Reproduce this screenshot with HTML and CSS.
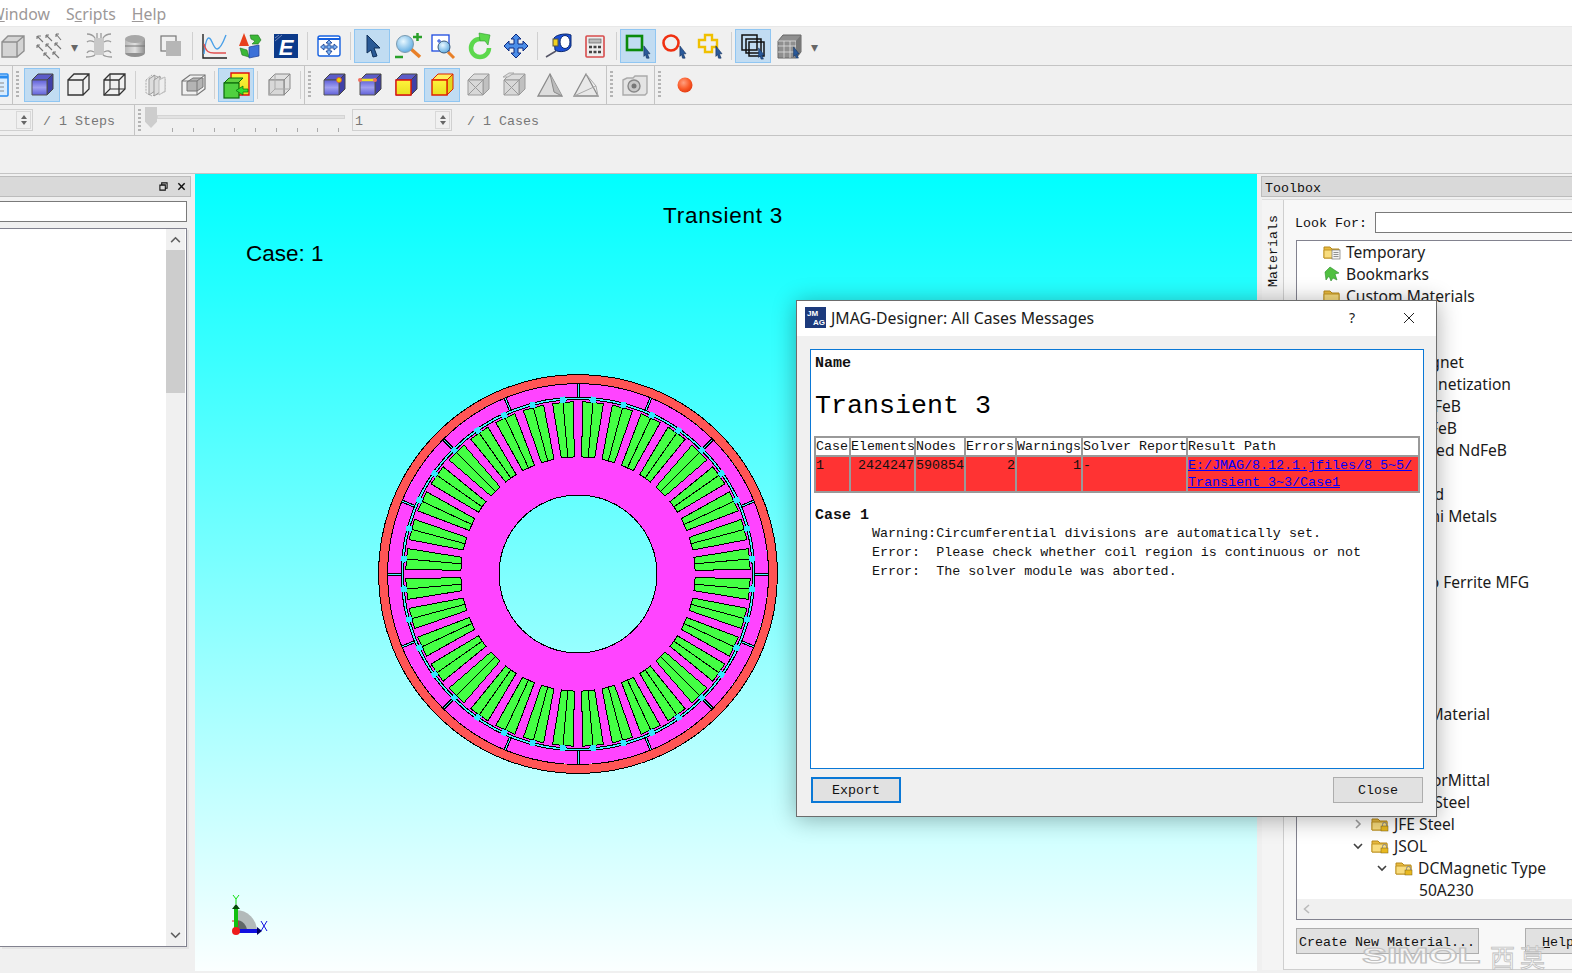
FILE: index.html
```html
<!DOCTYPE html>
<html lang="en">
<head>
<meta charset="utf-8">
<title>JMAG-Designer</title>
<link rel="stylesheet" href="styles.css">
</head>
<body>
<svg class="defs" aria-hidden="true">
  <defs>
    <linearGradient id="gb" x1="0" y1="0" x2="0" y2="1"><stop offset="0" stop-color="#5f5fd8"/><stop offset=".5" stop-color="#a0a0f0"/><stop offset="1" stop-color="#6060d8"/></linearGradient>
    <linearGradient id="gy" x1="0" y1="0" x2="0" y2="1"><stop offset="0" stop-color="#fff23c"/><stop offset="1" stop-color="#e8e020"/></linearGradient>
    <linearGradient id="gc" x1="0" y1="0" x2="1" y2="0"><stop offset="0" stop-color="#b8b8b8"/><stop offset=".5" stop-color="#e0e0e0"/><stop offset="1" stop-color="#8e8e8e"/></linearGradient>
    <radialGradient id="gr" cx=".4" cy=".35" r=".7"><stop offset="0" stop-color="#ffa080"/><stop offset=".6" stop-color="#fa5a28"/><stop offset="1" stop-color="#e03810"/></radialGradient>
    <radialGradient id="gl" cx=".4" cy=".35" r=".7"><stop offset="0" stop-color="#e8f8ff"/><stop offset="1" stop-color="#5aa8e0"/></radialGradient>
    <symbol id="bluecube" viewBox="0 0 28 28">
      <path d="M4 9L10 3H25L19 9Z" fill="#5c5cc8" stroke="#444" stroke-width="1"/>
      <path d="M19 9L25 3V18L19 24Z" fill="#4040a8" stroke="#444" stroke-width="1"/>
      <path d="M4 9H19V24H4Z" fill="url(#gb)" stroke="#555" stroke-width="1"/>
    </symbol>
    <symbol id="wire" viewBox="0 0 28 28">
      <path d="M4 9H19V24H4ZM4 9L10 3H25V18L19 24M19 9L25 3" fill="none" stroke="#333" stroke-width="1.3"/>
    </symbol>
    <symbol id="crate" viewBox="0 0 28 28">
      <path d="M4 9L10 3H25L19 9Z" fill="#ddd" stroke="#9a9a9a"/>
      <path d="M19 9L25 3V18L19 24Z" fill="#c0c0c0" stroke="#9a9a9a"/>
      <path d="M4 9H19V24H4Z" fill="#d8d8d8" stroke="#9a9a9a"/>
      <path d="M4 9L19 24M19 9L4 24" stroke="#9a9a9a" fill="none"/>
    </symbol>
    <symbol id="cursor" viewBox="0 0 10 16">
      <path d="M2 1L9 10L6 10L8 15L5 15L4 11L2 13Z" fill="#2a5a9a" stroke="#12305c" stroke-width=".7"/>
    </symbol>
    <symbol id="folder" viewBox="0 0 18 16">
      <path d="M1 3H7L9 5H16V14H1Z" fill="#e7b93f" stroke="#b88a1c"/>
      <path d="M1 6H16V14H1Z" fill="#f8dc7e" stroke="#c29624"/>
    </symbol>
  </defs>
</svg>

<div class="app">
  <nav class="menubar">
    <span class="menu menu-first"><u>W</u>indow</span>
    <span class="menu">S<u>c</u>ripts</span>
    <span class="menu"><u>H</u>elp</span>
  </nav>

  <div class="toolbar tb1">
    <button class="tool"><svg viewBox="0 0 28 28"><path d="M3 10H18V25H3ZM3 10L9 4H25V19L18 25M18 10L25 4" fill="#d4d4d4" stroke="#8f8f8f" stroke-width="1.4"/></svg></button>
    <button class="tool"><svg viewBox="0 0 28 28"><g stroke="#777" stroke-width="1.1" fill="none"><path d="M2 4l6 6M6 4l-3 0M2 4v3"/><path d="M11 3l6 6M11 3h3M11 3v3"/><path d="M21 2l5 6M21 2h3M21 2v3"/><path d="M2 13l6 6M2 13h3M2 13v3"/><path d="M11 12l6 6M11 12h3M11 12v3"/><path d="M20 11l6 6M20 11h3M20 11v3"/><path d="M9 21l6 6M9 21h3M9 21v3"/><path d="M18 20l6 6M18 20h3M18 20v3"/></g></svg></button>
    <span class="drop">&#9662;</span>
    <button class="tool"><svg viewBox="0 0 28 28"><rect x="9" y="6" width="10" height="17" fill="#c8c8c8"/><g stroke="#9a9a9a" stroke-width="1.3" fill="none"><path d="M10 6C8 3 5 2 2 2M18 6C20 3 23 2 26 2M12 6V1M16 6V1M10 23C7 25 4 25 1 25M18 23C21 25 24 25 27 25M9 10C6 8 3 9 2 10M19 10C22 8 25 9 26 10M9 20C5 18 3 19 2 21M19 20C23 18 25 19 26 21"/></g></svg></button>
    <button class="tool"><svg viewBox="0 0 28 28"><ellipse cx="14" cy="21" rx="10" ry="4" fill="#909090"/><rect x="4" y="7" width="20" height="14" fill="url(#gc)"/><ellipse cx="14" cy="7" rx="10" ry="4" fill="#a8a8a8"/><path d="M4 14H24" stroke="#777"/></svg></button>
    <button class="tool"><svg viewBox="0 0 28 28"><rect x="4" y="4" width="15" height="15" fill="none" stroke="#777" stroke-width="1.2"/><rect x="9" y="9" width="15" height="15" fill="#b6b6b6"/></svg></button>
    <span class="sep"></span>
    <button class="tool"><svg viewBox="0 0 28 28"><path d="M3 2V26H27" fill="none" stroke="#222" stroke-width="1.4"/><path d="M4 22C6 4 9 3 12 10S18 24 26 3" fill="none" stroke="#4aa0e8" stroke-width="1.4"/><path d="M4 12C6 20 9 21 14 21H26" fill="none" stroke="#e05050" stroke-width="1.4"/></svg></button>
    <button class="tool"><svg viewBox="0 0 28 28"><path d="M3 14L8 1L13 14Z" fill="#e8401c"/><path d="M14 3h8l3 5-3 4h-6l3-3-4-2Z" fill="#3cb838" stroke="#1c701c" stroke-width=".6"/><path d="M4 16l7 2 2 7-7-2Z" fill="#3cb838" stroke="#1c701c" stroke-width=".6"/><path d="M13 15L23 13V24L13 26Z" fill="#3c70d8" stroke="#1c3c90" stroke-width=".7"/></svg></button>
    <button class="tool"><svg viewBox="0 0 28 28"><rect x="2" y="2" width="24" height="24" fill="#0c3a8a"/><path d="M3 9L10 3M3 6L7 3" stroke="#8a9ac8" stroke-width=".8"/><text x="14" y="23" class="e-logo">E</text></svg></button>
    <span class="sep"></span>
    <button class="tool"><svg viewBox="0 0 28 28"><rect x="3" y="4" width="22" height="20" rx="2" fill="#fff" stroke="#1560e0" stroke-width="1.4"/><path d="M3 7H25" stroke="#1560e0" stroke-width="2"/><path d="M14 8L11 11H13V14H9V12L5.500 15 9 18V16H13V19H11L14 23 17 19H15V16H19V18L22.500 15 19 12V14H15V11H17Z" fill="#7ab0f0" stroke="#103a90" stroke-width=".8"/></svg></button>
    <span class="sep"></span>
    <button class="tool on"><svg viewBox="0 0 28 28"><path d="M9 3L22 16 16 16 19 24 15 25 13 18 9 21Z" fill="#2a5a96" stroke="#10305a"/></svg></button>
    <button class="tool"><svg viewBox="0 0 28 28"><path d="M17 17L26 25" stroke="#e88028" stroke-width="3.500"/><circle cx="11" cy="12" r="8.500" fill="url(#gl)" stroke="#7a9ab0"/><path d="M19 5H28M23.500 1V9" stroke="#2aa02a" stroke-width="2.500"/><path d="M1 25H9" stroke="#2aa02a" stroke-width="2.500" fill="none"/></svg></button>
    <button class="tool"><svg viewBox="0 0 28 28"><rect x="2" y="3" width="17" height="16" fill="#fff" stroke="#1c4ae0" stroke-width="1.3"/><path d="M7 9h4M9 7v4" stroke="#1c4ae0"/><path d="M18 20L24 26" stroke="#e88028" stroke-width="3"/><circle cx="14" cy="15" r="6" fill="url(#gl)" stroke="#3a5a7a"/></svg></button>
    <button class="tool"><svg viewBox="0 0 28 28"><path d="M14 7A9 9 0 1 0 23 16" fill="none" stroke="#5cd84c" stroke-width="4.500"/><path d="M13 1L24 3 22 13 19 9 14 9Z" fill="#5cd84c" stroke="#2a9a2a" stroke-width=".6"/></svg></button>
    <button class="tool"><svg viewBox="0 0 28 28"><path d="M14 2L19 7H16V12H21V9L26 14 21 19V16H16V21H19L14 26 9 21H12V16H7V19L2 14 7 9V12H12V7H9Z" fill="#4c8ee8" stroke="#0c2a80"/></svg></button>
    <span class="sep"></span>
    <button class="tool"><svg viewBox="0 0 28 28"><path d="M1 25L11 19" stroke="#556" stroke-width="1.5"/><path d="M9 6C12 2 22 1 26 3V14C24 20 14 21 10 18Z" fill="#1c50d8" stroke="#0c2a70"/><ellipse cx="20" cy="10" rx="5" ry="6.500" fill="#fff" stroke="#0c2a70"/><rect x="8" y="7" width="5" height="7" fill="#f0d020" stroke="#554"/></svg></button>
    <button class="tool"><svg viewBox="0 0 28 28"><rect x="5" y="4" width="18" height="21" rx="1" fill="#eee" stroke="#d84c4c" stroke-width="1.6"/><rect x="8" y="7" width="12" height="4" fill="#bbb" stroke="#666" stroke-width=".7"/><path d="M8 15h3M12.500 15h3M17 15h3M8 20h3M12.500 20h3M17 20h3" stroke="#444" stroke-width="2.500"/></svg></button>
    <span class="sep"></span>
    <button class="tool on"><svg viewBox="0 0 28 28"><rect x="3" y="4" width="15" height="14" fill="none" stroke="#0a8a0a" stroke-width="2.600"/><use href="#cursor" x="18" y="13" width="9" height="14"/></svg></button>
    <button class="tool"><svg viewBox="0 0 28 28"><circle cx="11" cy="11" r="7.500" fill="none" stroke="#f03010" stroke-width="2.600"/><use href="#cursor" x="18" y="13" width="9" height="14"/></svg></button>
    <button class="tool"><svg viewBox="0 0 28 28"><path d="M9 3H16V8H21V15H16V20H9V15H3V8H9Z" fill="none" stroke="#f0c000" stroke-width="2.400"/><use href="#cursor" x="18" y="13" width="9" height="14"/></svg></button>
    <span class="sep"></span>
    <button class="tool on"><svg viewBox="0 0 28 28"><g fill="none" stroke="#111" stroke-width="1.500"><rect x="3" y="3" width="15" height="15"/><rect x="7" y="7" width="15" height="14"/><rect x="10" y="10" width="15" height="14"/></g><use href="#cursor" x="18" y="15" width="8" height="13"/></svg></button>
    <button class="tool"><svg viewBox="0 0 28 28"><path d="M3 9L8 3H26V20L21 26H3Z" fill="#8f8f8f" stroke="#666"/><path d="M3 14H21M3 20H21M9 9V26M15 9V26M3 9H21V26" stroke="#e0e0e0" fill="none" stroke-width=".8"/><path d="M21 9L26 3V20L21 26Z" fill="#777"/><use href="#cursor" x="17" y="14" width="8" height="13"/></svg></button>
    <span class="drop">&#9662;</span>
  </div>

  <div class="toolbar tb2">
    <div class="tbgroup tbg-a">
      <svg class="cal" viewBox="0 0 10 24"><rect x="-10" y="1" width="18" height="22" rx="1" fill="#d8ecff" stroke="#2a8cf0" stroke-width="1.500"/><path d="M-10 4H8" stroke="#2a8cf0" stroke-width="3"/><path d="M-6 10H4M-6 14H4M-6 18H4" stroke="#888" stroke-width="1"/></svg>
    </div>
    <div class="tbgroup tbg-b">
      <span class="grip"></span>
      <button class="tool on"><svg viewBox="0 0 28 28"><use href="#bluecube"/></svg></button>
      <button class="tool"><svg viewBox="0 0 28 28"><path d="M4 9H19V24H4ZM4 9L10 3H25V18L19 24M19 9L25 3" fill="none" stroke="#333" stroke-width="1.300"/></svg></button>
      <button class="tool"><svg viewBox="0 0 28 28"><use href="#wire"/><path d="M10 3V18H25M10 18L4 24" fill="none" stroke="#333" stroke-width="1.100"/></svg></button>
      <span class="sep"></span>
      <button class="tool"><svg viewBox="0 0 28 28"><g fill="none" stroke="#aaa"><path d="M3 9L9 4 22 8V21L9 25 3 22Z" stroke-dasharray="2 1"/></g><path d="M6 8L12 4V20L6 24Z" fill="#ddd" stroke="#999"/><path d="M11 9L17 5V21L11 25Z" fill="#ddd" stroke="#999"/><path d="M16 9L22 6V20L16 24Z" fill="#eee" stroke="#bbb"/></svg></button>
      <button class="tool"><svg viewBox="0 0 28 28"><path d="M3 10L11 4H26V18L18 24H3Z" fill="none" stroke="#777" stroke-width="1.200"/><path d="M8 11L14 7H24V16L18 20H8Z" fill="#b4b4b4" stroke="#777"/><path d="M3 10H18V24M18 10L26 4" fill="none" stroke="#777"/></svg></button>
      <span class="sep"></span>
      <button class="tool on"><svg viewBox="0 0 28 28"><path d="M9 2H27V24H9Z" fill="url(#gy)" stroke="#e01010" stroke-width="1.400"/><path d="M2 12L7 7H21L16 12Z" fill="#60d040" stroke="#0a6a0a"/><rect x="2" y="12" width="15" height="15" fill="#50d040" stroke="#0a6a0a" stroke-width="1.200"/><path d="M21 15L14 19.500 21 24V21H26V18H21Z" fill="#30e030" stroke="#0a6a0a" stroke-width=".7"/></svg></button>
      <span class="sep"></span>
      <button class="tool"><svg viewBox="0 0 28 28"><path d="M4 9L10 3H25L19 9ZM19 9L25 3V18L19 24Z" fill="#e0e0e0" stroke="#888"/><path d="M4 9H19V24H4Z" fill="#d8d8d8" stroke="#888" stroke-width="1.200"/><path d="M10 3V18H25M10 18L4 24" fill="none" stroke="#aaa"/></svg></button>
      <span class="sep"></span>
    </div>
    <div class="tbgroup tbg-c">
      <span class="grip"></span>
      <button class="tool"><svg viewBox="0 0 28 28"><use href="#bluecube"/><circle cx="19" cy="9" r="2.500" fill="#e8d800" stroke="#e05030" stroke-width=".8"/></svg></button>
      <button class="tool"><svg viewBox="0 0 28 28"><use href="#bluecube"/><path d="M4 9H19" stroke="#f0e020" stroke-width="2.500"/><circle cx="4" cy="9" r="2" fill="#f07060"/><circle cx="19" cy="9" r="2" fill="#f07060"/></svg></button>
      <button class="tool"><svg viewBox="0 0 28 28"><use href="#bluecube"/><path d="M4 9H19V24H4Z" fill="url(#gy)" stroke="#e01010" stroke-width="1.400"/></svg></button>
      <button class="tool on"><svg viewBox="0 0 28 28"><path d="M4 9L10 3H25L19 9Z" fill="#fff060" stroke="#e02000"/><path d="M19 9L25 3V18L19 24Z" fill="#e0d820" stroke="#e02000"/><path d="M4 9H19V24H4Z" fill="url(#gy)" stroke="#e02000" stroke-width="1.400"/></svg></button>
      <button class="tool"><svg viewBox="0 0 28 28"><use href="#crate"/></svg></button>
      <button class="tool"><svg viewBox="0 0 28 28"><use href="#crate"/><path d="M3 6L9 2H14L8 6Z" fill="#ddd" stroke="#aaa"/></svg></button>
      <button class="tool"><svg viewBox="0 0 28 28"><path d="M2 25L14 3 26 25Z" fill="#ddd" stroke="#8a8a8a" stroke-width="1.300"/><path d="M14 3L18 21 26 25" fill="#bbb" stroke="#8a8a8a"/></svg></button>
      <button class="tool"><svg viewBox="0 0 28 28"><path d="M2 25L14 3 26 25Z" fill="#e8e8e8" stroke="#8a8a8a" stroke-width="1.300"/><path d="M14 3L24 15 26 25M2 25L24 15" fill="none" stroke="#aaa"/></svg></button>
    </div>
    <div class="tbgroup tbg-d">
      <span class="grip"></span>
      <button class="tool"><svg viewBox="0 0 28 28"><path d="M2 9L6 7H12L14 5H26V22L24 24H2Z" fill="#e4e4e4" stroke="#aaa" stroke-width="1.400"/><circle cx="13" cy="15" r="6" fill="#c8c8c8" stroke="#888" stroke-width="1.400"/><circle cx="13" cy="15" r="2.500" fill="#777"/></svg></button>
    </div>
    <div class="tbgroup tbg-e">
      <span class="grip"></span>
      <button class="tool"><svg viewBox="0 0 28 28"><circle cx="14" cy="14" r="7.500" fill="url(#gr)"/></svg></button>
    </div>
  </div>

  <div class="toolbar tb3">
    <div class="tb3-left">
      <div class="spin spin-a"><span class="spin-val"></span><span class="spin-btn"><i class="up"></i><i class="down"></i></span></div>
      <span class="steptext">/ 1 Steps</span>
    </div>
    <div class="tb3-right">
      <span class="grip"></span>
      <div class="slider"><span class="groove"></span><span class="handle"></span><span class="ticks"></span></div>
      <div class="spin spin-b"><span class="spin-val">1</span><span class="spin-btn"><i class="up"></i><i class="down"></i></span></div>
      <span class="steptext">/ 1 Cases</span>
    </div>
  </div>

  <div class="band"></div>

  <main class="main">
    <aside class="left">
      <div class="dock">
        <svg class="dock-ic" viewBox="0 0 10 10"><path d="M3 1H9V7H7V3H3ZM1 3.500H7V9H1Z" fill="none" stroke="#111" stroke-width="1.200"/></svg>
        <svg class="dock-ic" viewBox="0 0 10 10"><path d="M1.500 1.500L8.500 8.500M8.500 1.500L1.500 8.500" stroke="#111" stroke-width="1.600"/></svg>
      </div>
      <div class="left-input"></div>
      <div class="left-tree">
        <div class="vscroll">
          <span class="sb-btn"><svg viewBox="0 0 12 8"><path d="M1 7L6 2 11 7" fill="none" stroke="#606060" stroke-width="1.800"/></svg></span>
          <span class="sb-thumb"></span>
          <span class="sb-track"></span>
          <span class="sb-btn"><svg viewBox="0 0 12 8"><path d="M1 1L6 6 11 1" fill="none" stroke="#606060" stroke-width="1.800"/></svg></span>
        </div>
      </div>
    </aside>

    <section class="view">
      <div class="view-title">Transient 3</div>
      <div class="view-case">Case: 1</div>
      <svg class="motor" viewBox="-210 -210 420 420">
        <defs>
          <g id="slot">
            <path d="M-10.500 -172L10.500 -172 6.500 -117 -6.500 -117Z" fill="#44ff44" stroke="#000" stroke-width="1"/>
            <path d="M0 -172V-117" stroke="#000" stroke-width="1"/>
            <path d="M-3 -172L-2.500 -178H2.500L3 -172Z" fill="#33e8ff"/>
          </g>
          <g id="div">
            <path d="M0 -190V-177" stroke="#000" stroke-width="3"/>
            <path d="M0 -190V-177" stroke="#44f4ff" stroke-width="1"/>
          </g>
        </defs>
        <path class="stator" d="M-190 0A190 190 0 1 0 190 0A190 190 0 1 0 -190 0ZM-79 0A79 79 0 1 1 79 0A79 79 0 1 1 -79 0Z" fill="#ff44ff" fill-rule="evenodd"/>
        <circle r="195" fill="none" stroke="#ff5555" stroke-width="9"/>
        <circle r="199.500" fill="none" stroke="#000" stroke-width="1"/>
        <circle r="190.500" fill="none" stroke="#000" stroke-width="1"/>
        <circle r="79" fill="none" stroke="#000" stroke-width="1"/>
        <circle r="177" fill="none" stroke="#000" stroke-width="1"/>
        <circle r="175.500" fill="none" stroke="#44f4ff" stroke-width="2"/>
        <circle r="174.500" fill="none" stroke="#000" stroke-width="1"/>
        <use href="#div"/><use href="#div" transform="rotate(22.5)"/><use href="#div" transform="rotate(45)"/><use href="#div" transform="rotate(67.5)"/><use href="#div" transform="rotate(90)"/><use href="#div" transform="rotate(112.5)"/><use href="#div" transform="rotate(135)"/><use href="#div" transform="rotate(157.5)"/><use href="#div" transform="rotate(180)"/><use href="#div" transform="rotate(202.5)"/><use href="#div" transform="rotate(225)"/><use href="#div" transform="rotate(247.5)"/><use href="#div" transform="rotate(270)"/><use href="#div" transform="rotate(292.5)"/><use href="#div" transform="rotate(315)"/><use href="#div" transform="rotate(337.5)"/>
        <use href="#slot" transform="rotate(5)"/><use href="#slot" transform="rotate(15)"/><use href="#slot" transform="rotate(25)"/><use href="#slot" transform="rotate(35)"/><use href="#slot" transform="rotate(45)"/><use href="#slot" transform="rotate(55)"/><use href="#slot" transform="rotate(65)"/><use href="#slot" transform="rotate(75)"/><use href="#slot" transform="rotate(85)"/><use href="#slot" transform="rotate(95)"/><use href="#slot" transform="rotate(105)"/><use href="#slot" transform="rotate(115)"/><use href="#slot" transform="rotate(125)"/><use href="#slot" transform="rotate(135)"/><use href="#slot" transform="rotate(145)"/><use href="#slot" transform="rotate(155)"/><use href="#slot" transform="rotate(165)"/><use href="#slot" transform="rotate(175)"/><use href="#slot" transform="rotate(185)"/><use href="#slot" transform="rotate(195)"/><use href="#slot" transform="rotate(205)"/><use href="#slot" transform="rotate(215)"/><use href="#slot" transform="rotate(225)"/><use href="#slot" transform="rotate(235)"/><use href="#slot" transform="rotate(245)"/><use href="#slot" transform="rotate(255)"/><use href="#slot" transform="rotate(265)"/><use href="#slot" transform="rotate(275)"/><use href="#slot" transform="rotate(285)"/><use href="#slot" transform="rotate(295)"/><use href="#slot" transform="rotate(305)"/><use href="#slot" transform="rotate(315)"/><use href="#slot" transform="rotate(325)"/><use href="#slot" transform="rotate(335)"/><use href="#slot" transform="rotate(345)"/><use href="#slot" transform="rotate(355)"/>
      </svg>
      <svg class="triad" viewBox="0 0 44 48">
        <path d="M8 37V16A21 21 0 0 1 29 37Z" fill="#b2baba"/>
        <path d="M8 37V26A11 11 0 0 1 19 37Z" fill="#606868"/>
        <path d="M4 27H10V33" fill="none" stroke="#e02020" stroke-width="1"/>
        <path d="M8 37V14" stroke="#10c010" stroke-width="4"/>
        <path d="M4 15L8 10 12 15Z" fill="#064806"/>
        <path d="M8 37H30" stroke="#1010e0" stroke-width="4"/>
        <path d="M29 33L34 37 29 41Z" fill="#000060"/>
        <circle cx="8" cy="37" r="4" fill="#ee1c1c"/>
        <path d="M5 1L8 5 11 1M8 5V10" fill="none" stroke="#10e010" stroke-width="1"/>
        <path d="M33 27L39 37M39 27L33 37" stroke="#1010e0" stroke-width="1"/>
      </svg>
    </section>

    <aside class="toolbox">
      <div class="tb-title">Toolbox</div>
      <div class="tb-frame">
        <div class="tb-tab"><span class="tb-tabtext">Materials</span></div>
        <div class="tb-panel">
          <div class="look"><span class="look-label">Look For:</span><span class="look-input"></span></div>
          <div class="tree">
            <div class="tree-rows">
              <div class="row d0"><span class="chev"></span><svg class="fold" viewBox="0 0 18 16"><use href="#folder"/><rect x="9" y="6" width="8" height="9" fill="#f4f4f4" stroke="#777" stroke-width=".7"/><path d="M10.500 8.500h5M10.500 10.500h5M10.500 12.500h5" stroke="#777" stroke-width=".8"/></svg><span>Temporary</span></div>
              <div class="row d0"><span class="chev"></span><svg class="fold" viewBox="0 0 18 16"><path d="M7 1L16 7 12 8 14 14 10 12 8 15 6 10 3 14 2 6Z" fill="#50c040" stroke="#2a8a2a" stroke-width=".6"/></svg><span>Bookmarks</span></div>
              <div class="row d0"><span class="chev"></span><svg class="fold" viewBox="0 0 18 16"><use href="#folder"/></svg><span>Custom Materials</span></div>
              <div class="row"></div><div class="row"></div>
              <div class="row end e1"><span>Magnet</span></div>
              <div class="row end e2"><span>Magnetization</span></div>
              <div class="row end e3"><span>NdFeB</span></div>
              <div class="row end e4"><span>SmFeB</span></div>
              <div class="row end e5"><span>Bonded NdFeB</span></div>
              <div class="row"></div>
              <div class="row end e6"><span>Bonded</span></div>
              <div class="row end e7"><span>Hitachi Metals</span></div>
              <div class="row"></div><div class="row"></div>
              <div class="row end e8"><span>Toho Ferrite MFG</span></div>
              <div class="row"></div><div class="row"></div><div class="row"></div><div class="row"></div><div class="row"></div>
              <div class="row end e9"><span>New Material</span></div>
              <div class="row"></div><div class="row"></div>
              <div class="row end e9"><span>ArcelorMittal</span></div>
              <div class="row end e10"><span>Nippon Steel</span></div>
              <div class="row d2"><svg class="chev" viewBox="0 0 12 12"><path d="M4 2L8 6 4 10" fill="none" stroke="#a0a0a0" stroke-width="1.600"/></svg><svg class="fold" viewBox="0 0 18 16"><use href="#folder"/><rect x="10" y="10" width="7" height="5" fill="#e8b820" stroke="#7a6010" stroke-width=".5"/><path d="M11.500 10V8.500a2 2 0 0 1 4 0V10" fill="none" stroke="#888" stroke-width="1"/></svg><span>JFE Steel</span></div>
              <div class="row d2"><svg class="chev" viewBox="0 0 12 12"><path d="M2 4L6 8 10 4" fill="none" stroke="#404040" stroke-width="1.600"/></svg><svg class="fold" viewBox="0 0 18 16"><use href="#folder"/><rect x="10" y="10" width="7" height="5" fill="#e8b820" stroke="#7a6010" stroke-width=".5"/><path d="M11.500 10V8.500a2 2 0 0 1 4 0V10" fill="none" stroke="#888" stroke-width="1"/></svg><span>JSOL</span></div>
              <div class="row d3"><svg class="chev" viewBox="0 0 12 12"><path d="M2 4L6 8 10 4" fill="none" stroke="#404040" stroke-width="1.600"/></svg><svg class="fold" viewBox="0 0 18 16"><use href="#folder"/><rect x="10" y="10" width="7" height="5" fill="#e8b820" stroke="#7a6010" stroke-width=".5"/><path d="M11.500 10V8.500a2 2 0 0 1 4 0V10" fill="none" stroke="#888" stroke-width="1"/></svg><span>DCMagnetic Type</span></div>
              <div class="row d4"><span>50A230</span></div>
            </div>
            <div class="hscroll"><svg viewBox="0 0 10 12"><path d="M7 2L2.500 6 7 10" fill="none" stroke="#bbb" stroke-width="1.600"/></svg></div>
          </div>
          <div class="tb-btns">
            <button class="qbtn create">Create New Material...</button>
            <button class="qbtn help"><u>H</u>elp</button>
          </div>
        </div>
      </div>
    </aside>
  </main>

  <div class="dialog">
    <header class="dlg-head">
      <svg class="dlg-ic" viewBox="0 0 21 21"><rect width="21" height="21" fill="#1c3a7c"/><text x="2" y="9" class="jm">JM</text><text x="8" y="18" class="jm">AG</text></svg>
      <span class="dlg-title">JMAG-Designer: All Cases Messages</span>
      <span class="dlg-q">?</span>
      <svg class="dlg-x" viewBox="0 0 12 12"><path d="M1 1L11 11M11 1L1 11" stroke="#222" stroke-width="1"/></svg>
    </header>
    <div class="dlg-body">
      <div class="msg">
        <div class="m-name">Name</div>
        <div class="m-h">Transient 3</div>
        <table class="m-table">
          <colgroup><col class="c1"><col class="c2"><col class="c3"><col class="c4"><col class="c5"><col class="c6"><col class="c7"></colgroup>
          <tr class="m-hd"><td>Case</td><td>Elements</td><td>Nodes</td><td>Errors</td><td>Warnings</td><td>Solver Report</td><td>Result Path</td></tr>
          <tr class="m-err"><td>1</td><td class="num">2424247</td><td class="num">590854</td><td class="num">2</td><td class="num">1</td><td>-</td><td class="path"><a href="#">E:/JMAG/8.12.1.jfiles/8_5~5/ Transient_3~3/Case1</a></td></tr>
        </table>
        <div class="m-case">Case 1</div>
        <div class="m-lines">
          <div>Warning:Circumferential divisions are automatically set.</div>
          <div>Error:  Please check whether coil region is continuous or not</div>
          <div>Error:  The solver module was aborted.</div>
        </div>
      </div>
      <div class="dlg-btns">
        <button class="qbtn export">Export</button>
        <button class="qbtn close">Close</button>
      </div>
    </div>
  </div>

  <div class="wm"><span class="wm-a">SIMOL</span><span class="wm-b">西莫</span></div>
</div>
</body>
</html>
```
FILE: styles.css
```css
* { box-sizing: border-box; }
html, body { margin: 0; padding: 0; }
body { width: 1572px; height: 973px; overflow: hidden; background: #f0f0f0; font-family: "Noto Sans", sans-serif; }
.defs { position: absolute; width: 0; height: 0; }
.app { position: relative; width: 1572px; height: 973px; overflow: hidden; display: flex; flex-direction: column; background: #f0f0f0; }

.menubar { height: 27px; background: #fff; border-bottom: 1px solid #e8e8e8; display: flex; align-items: center; color: #9c9898; font-size: 15.8px; flex: none; padding-top: 2px; }
.menu { margin-right: 16px; }
.menu-first { margin-left: -10px; }

.toolbar { display: flex; flex: none; border-bottom: 1px solid #c4c4c4; background: #f0f0f0; }
.tb1 { height: 39px; align-items: center; padding-left: 0; margin-left: -5px; width: 1577px; }
.tb2 { height: 39px; align-items: stretch; }
.tb3 { height: 31px; align-items: stretch; }
.tool { width: 36px; height: 34px; padding: 0; margin: 0; flex: none; border: 1px solid transparent; background: transparent; display: flex; align-items: center; justify-content: center; }
.tool svg { width: 28px; height: 28px; display: block; }
.tool.on { background: #c1dcf2; border-color: #90c6f2; }
.drop { width: 14px; flex: none; text-align: center; font-size: 14px; color: #666; }
.sep { width: 7px; flex: none; height: 28px; display: flex; justify-content: center; position: relative; }
.sep::before { content: ""; width: 1px; background: #d0d0d0; height: 100%; }

.tbgroup { display: flex; align-items: center; flex: none; border-right: 1px solid #c4c4c4; height: 100%; }
.tbg-a { width: 13px; }
.cal { width: 10px; height: 24px; display: block; }
.tbg-b { width: 292px; }
.tbg-c { width: 302px; }
.tbg-d { width: 48px; }
.tbg-e { border-right: 0; width: 60px; }
.grip { width: 3px; height: 28px; flex: none; background: repeating-linear-gradient(#b4b4b4 0 2px, transparent 2px 4px); }
.tbg-b .grip { margin: 0 5px 0 3px; }
.tbg-c .grip { margin: 0 5px 0 3px; }
.tbg-d .grip { margin: 0 4px 0 3px; }
.tbg-e .grip { margin: 0 6px 0 3px; }

.tb3-left { width: 135px; flex: none; border-right: 1px solid #c4c4c4; display: flex; align-items: center; gap: 10px; }
.tb3-right { flex: 1; display: flex; align-items: center; }
.tb3-right .grip { height: 22px; margin: 0 4px 0 3px; }
.spin { height: 22px; background: #f0f0f0; border: 1px solid #d0d0d0; display: flex; align-items: center; justify-content: space-between; font: 13.33px "Liberation Mono", monospace; color: #777; flex: none; }
.spin-a { width: 33px; border-left: 0; }
.spin-b { width: 100px; margin-left: 0; }
.spin-val { padding-left: 2px; padding-top: 2px; }
.spin-btn { width: 15px; height: 18px; margin-right: 1px; border: 1px solid #d8d8d8; display: flex; flex-direction: column; align-items: center; justify-content: space-around; padding: 2px 0; }
.spin-btn i { width: 0; height: 0; border-left: 3px solid transparent; border-right: 3px solid transparent; display: block; }
.spin-btn .up { border-bottom: 4px solid #666; }
.spin-btn .down { border-top: 4px solid #666; }
.steptext { font: 13.33px "Liberation Mono", monospace; color: #777; white-space: pre; padding-top: 3px; }
.tb3-right .steptext { margin-left: 15px; }
.slider { width: 200px; height: 30px; margin-right: 7px; position: relative; flex: none; }
.groove { position: absolute; left: 12px; right: 0; top: 10px; height: 4px; background: #e2e2e2; border: 1px solid #d4d4d4; }
.handle { position: absolute; left: 0; top: 2px; width: 12px; height: 21px; background: #cdcdcd; clip-path: polygon(0 0, 100% 0, 100% 70%, 50% 100%, 0 70%); }
.ticks { position: absolute; left: 27px; right: 6px; top: 23px; height: 4px; background: repeating-linear-gradient(90deg, #aaa 0 1px, transparent 1px 20.75px); }

.band { height: 38px; flex: none; border-bottom: 1px solid #c4c4c4; }

.main { flex: 1; display: flex; min-height: 0; }
.left { width: 195px; flex: none; padding: 2px 0 0; }
.dock { height: 21px; width: 191px; background: #d9d9d9; border-right: 1px solid #bcbcbc; border-bottom: 1px solid #bcbcbc; border-top: 1px solid #bcbcbc; display: flex; align-items: center; justify-content: flex-end; gap: 9px; padding-right: 4px; }
.dock-ic { width: 9px; height: 9px; display: block; }
.left-input { margin-top: 4px; height: 21px; width: 187px; background: #fff; border: 1px solid #7a7a7a; border-left: 0; }
.left-tree { margin-top: 6px; width: 187px; height: 719px; background: #fff; border: 1px solid #82828f; border-left: 0; display: flex; justify-content: flex-end; box-shadow: 2px 2px 0 #e4e4e4; }
.vscroll { width: 19px; margin-right: 1px; background: #f0f0f0; display: flex; flex-direction: column; }
.sb-btn { height: 21px; display: flex; align-items: center; justify-content: center; flex: none; }
.sb-btn svg { width: 11px; height: 7px; }
.sb-thumb { height: 143px; background: #cdcdcd; flex: none; }
.sb-track { flex: 1; }

.view { width: 1062px; height: 797px; flex: none; position: relative; background: linear-gradient(#00ffff, #fbffff); }
.view-title, .view-case { position: absolute; font: 22.5px "Liberation Sans", sans-serif; color: #000; white-space: nowrap; }
.view-title { left: 468px; top: 29px; letter-spacing: .75px; }
.view-case { left: 51px; top: 67px; }
.motor { position: absolute; left: 172.5px; top: 189.5px; width: 420px; height: 420px; shape-rendering: crispEdges; }
.triad { position: absolute; left: 33px; top: 720px; width: 44px; height: 48px; }

.toolbox { flex: 1; min-width: 0; padding-top: 2px; display: flex; flex-direction: column; overflow: hidden; }
.tb-title { height: 21px; margin-left: 4px; background: #d9d9d9; border: 1px solid #bcbcbc; border-right: 0; font: 13.33px/23px "Liberation Mono", monospace; color: #111; padding-left: 3px; flex: none; }
.tb-frame { margin: 2px 0 3px 5px; flex: 1; min-height: 0; display: flex; background: #f8f8f8; border-top: 1px solid #ddd; }
.tb-tab { width: 21px; flex: none; background: #f4f4f4; padding: 15px 0 0 3px; display: flex; justify-content: center; align-items: flex-start; }
.tb-tabtext { writing-mode: vertical-rl; transform: rotate(180deg); font: 13.33px/16px "Liberation Mono", monospace; color: #111; }
.tb-panel { flex: 1; min-width: 0; border-left: 1px solid #cfcfcf; border-bottom: 1px solid #cfcfcf; padding: 12px 0 15px 12px; display: flex; flex-direction: column; }
.look { display: flex; align-items: center; height: 21px; flex: none; font: 13.33px "Liberation Mono", monospace; color: #111; margin-left: -1px; }
.look-label { width: 80px; flex: none; padding-top: 2px; }
.look-input { flex: 1; height: 21px; background: #fff; border: 1px solid #7a7a7a; border-right: 0; }
.tree { margin-top: 7px; flex: 1; min-height: 0; border: 1px solid #82828f; border-right: 0; background: #fff; display: flex; flex-direction: column; }
.tree-rows { flex: 1; min-height: 0; overflow: hidden; }
.row { height: 22px; flex: none; display: flex; align-items: center; font-size: 15.6px; color: #1b1b1b; white-space: nowrap; }
.d0 { padding-left: 0; }
.d2 { padding-left: 48px; }
.d3 { padding-left: 72px; }
.d4 { padding-left: 122px; }
.chev { width: 26px; height: 12px; flex: none; display: block; }
.fold { width: 18px; height: 16px; flex: none; margin-right: 5px; display: block; }
.end { justify-content: flex-end; }
.e1 { width: 167px; } .e2 { width: 214px; } .e3 { width: 164px; } .e4 { width: 160px; } .e5 { width: 210px; }
.e6 { width: 147px; } .e7 { width: 200px; } .e8 { width: 232px; } .e9 { width: 193px; } .e10 { width: 173px; }
.hscroll { height: 20px; flex: none; background: #f0f0f0; padding-left: 5px; display: flex; align-items: center; }
.hscroll svg { width: 10px; height: 12px; }
.tb-btns { display: flex; flex: none; margin-top: 8px; }
.qbtn { height: 26px; padding: 0; background: #e1e1e1; border: 1px solid #adadad; font: 13.33px "Liberation Mono", monospace; color: #111; }
.create { width: 183px; text-align: left; padding: 3px 0 0 2px; flex: none; }
.help { width: 60px; margin-left: 46px; text-align: left; padding: 3px 0 0 16px; flex: none; }

.dialog { position: absolute; left: 796px; top: 300px; width: 641px; height: 517px; background: #f0f0f0; border: 1px solid #6d6d6d; box-shadow: 0 2px 22px rgba(0,0,0,.32); display: flex; flex-direction: column; }
.dlg-head { height: 35px; flex: none; background: #fff; display: flex; align-items: center; padding: 0 0 2px 8px; position: relative; }
.dlg-ic { width: 21px; height: 21px; flex: none; margin-right: 5px; }
.jm { font: bold 8px "Liberation Sans", sans-serif; fill: #fff; }
.dlg-title { font-size: 15.8px; color: #1a1a1a; flex: 1; }
.dlg-q { width: 16px; text-align: center; font-size: 14px; color: #222; margin-right: 43px; }
.dlg-x { width: 12px; height: 12px; margin-right: 21px; flex: none; }
.dlg-body { flex: 1; display: flex; flex-direction: column; padding: 13px 12px 0 13px; min-height: 0; }
.msg { height: 420px; flex: none; background: #fff; border: 1px solid #0a78d6; padding: 4px 4px 0; font: 13.33px/19px "Liberation Mono", monospace; color: #111; }
.m-name { font-weight: bold; font-size: 15px; line-height: 17px; padding-top: 1px; }
.m-h { font-size: 26.67px; line-height: 32px; margin-top: 18px; color: #000; }
.m-table { margin: 14px 0 0 -1px; width: 604px; table-layout: fixed; border-collapse: separate; border-spacing: 0; border: 1px solid #999; font-size: 13.33px; line-height: 17px; }
.m-table td { border: 1px solid #9a9a9a; padding: 0; vertical-align: top; overflow: hidden; white-space: nowrap; }
.m-table td.path { white-space: normal; }
.c1 { width: 35px; } .c2 { width: 65px; } .c3 { width: 50px; } .c4 { width: 51px; } .c5 { width: 66px; } .c6 { width: 105px; } .c7 { width: 232px; }
.m-err td { background: #ff3333; height: 36px; }
.num { text-align: right; }
.m-err a { color: #0000ff; text-decoration: underline; }
.m-case { font-weight: bold; font-size: 15px; line-height: 17px; margin-top: 14px; }
.m-lines { padding-left: 57px; font-size: 13.37px; }
.m-lines div { white-space: pre; }
.dlg-btns { display: flex; justify-content: space-between; margin-top: 8px; padding: 0 1px; }
.export { width: 90px; border: 2px solid #0a78d6; }
.close { width: 90px; }

.wm { position: absolute; left: 1362px; top: 946px; display: flex; align-items: center; height: 20px; pointer-events: none; }
.wm-a { font: bold 22px "Liberation Sans", sans-serif; color: rgba(255,255,255,.55); -webkit-text-stroke: 1px #c0c0c0; transform: scaleX(1.7); transform-origin: left center; width: 128px; display: block; }
.wm-b { font: 25px "Noto Sans CJK SC", sans-serif; color: rgba(255,255,255,.5); -webkit-text-stroke: .8px #c0c0c0; letter-spacing: 5px; white-space: nowrap; }
svg text.e-logo { font: italic bold 22px "Liberation Sans", sans-serif; fill: #fff; text-anchor: middle; }
```
